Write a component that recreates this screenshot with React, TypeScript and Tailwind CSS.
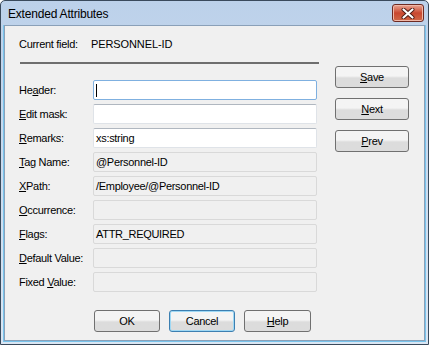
import React from "react";

const U = ({ children }: { children: React.ReactNode }) => <span className="underline underline-offset-[1px]">{children}</span>;

function Field({ label, value, editable, focused }: { label: React.ReactNode; value?: string; editable?: boolean; focused?: boolean }) {
  return (
    <div className="flex h-[20px] items-center">
      <div className="w-[74px] shrink-0">{label}</div>
      <div
        className={
          "relative flex h-[20px] w-[224px] items-center rounded-[2px] border pl-[2px] " +
          (focused
            ? "border-[#7fb0e0] bg-white"
            : editable
            ? "border-[#dfe3e8] border-t-[#b0b7c0] bg-white"
            : "border-[#d9d9d9] bg-[#f0f0f0]")
        }
      >
        {focused && <div className="h-[13px] w-[1px] bg-black" />}
        {value}
      </div>
    </div>
  );
}

function Btn({ children, w = "w-[74px]", def }: { children: React.ReactNode; w?: string; def?: boolean }) {
  return (
    <div
      className={
        "flex h-[22px] items-center justify-center rounded-[3px] border bg-gradient-to-b from-[#f4f4f4] from-45% to-[#dcdcdc] to-55% " +
        w +
        (def ? " border-[#3c7fb1] shadow-[inset_0_0_0_1px_#9fd8f4]" : " border-[#707070]")
      }
    >
      {children}
    </div>
  );
}

export default function App() {
  return (
    <div
      className="flex h-[345px] w-[429px] flex-col rounded-t-[5px] border border-[#3a4a5c] bg-gradient-to-b from-[#bcd1ea] to-[#dae6f3] text-[11px] tracking-[-0.3px] text-black"
      style={{ fontFamily: '"Liberation Sans", Arial, sans-serif' }}
    >
      <div className="flex h-[24px] shrink-0 items-center justify-between pl-[7px] pr-[4px]">
        <div className="pt-[2px] text-[12px] tracking-[-0.2px]">Extended Attributes</div>
        <div className="flex h-[18px] w-[32px] items-center justify-center rounded-[3px] border border-[#6e2a22] bg-gradient-to-b from-[#e8a493] via-[#c9472f] to-[#d06848] shadow-[inset_0_0_0_1px_#f0b8a8]">
          <svg width="14" height="11" viewBox="0 0 14 11">
            <path d="M2.5 1.5 L11.5 9.5 M11.5 1.5 L2.5 9.5" stroke="#4a1a14" strokeWidth="4" strokeLinecap="round" />
            <path d="M2.5 1.5 L11.5 9.5 M11.5 1.5 L2.5 9.5" stroke="#ffffff" strokeWidth="2.2" strokeLinecap="round" />
          </svg>
        </div>
      </div>
      <div className="mx-[2px] mb-[2px] flex flex-1 border-x border-b border-[#78c4ec]">
        <div className="flex flex-1 border border-[#8aa0b8] bg-[#f0f0f0]">
          <div className="flex flex-col pl-[14px] pt-[11px]">
            <div className="flex h-[14px] items-center">
              <div className="w-[72px]">Current field:</div>
              <div className="tracking-[-0.1px]">PERSONNEL-ID</div>
            </div>
            <div className="ml-[1px] mt-[11px] h-[2px] w-[299px] bg-[#6e6e6e]" />
            <div className="mt-[16px] flex flex-col gap-[4px]">
              <Field label={<>He<U>a</U>der:</>} focused />
              <Field label={<><U>E</U>dit mask:</>} editable />
              <Field label={<><U>R</U>emarks:</>} editable value="xs:string" />
              <Field label={<><U>T</U>ag Name:</>} value="@Personnel-ID" />
              <Field label={<><U>X</U>Path:</>} value="/Employee/@Personnel-ID" />
              <Field label={<><U>O</U>ccurrence:</>} />
              <Field label={<><U>F</U>lags:</>} value="ATTR_REQUIRED" />
              <Field label={<><U>D</U>efault Value:</>} />
              <Field label={<>Fixed <U>V</U>alue:</>} />
            </div>
            <div className="ml-[75px] mt-[18px] flex gap-[9px]">
              <Btn w="w-[66px]">OK</Btn>
              <Btn w="w-[66px]" def>Cancel</Btn>
              <Btn w="w-[67px]"><span><U>H</U>elp</span></Btn>
            </div>
          </div>
          <div className="ml-[16px] mt-[40px] flex flex-col gap-[10px]">
            <Btn><span><U>S</U>ave</span></Btn>
            <Btn><span><U>N</U>ext</span></Btn>
            <Btn><span><U>P</U>rev</span></Btn>
          </div>
        </div>
      </div>
    </div>
  );
}
